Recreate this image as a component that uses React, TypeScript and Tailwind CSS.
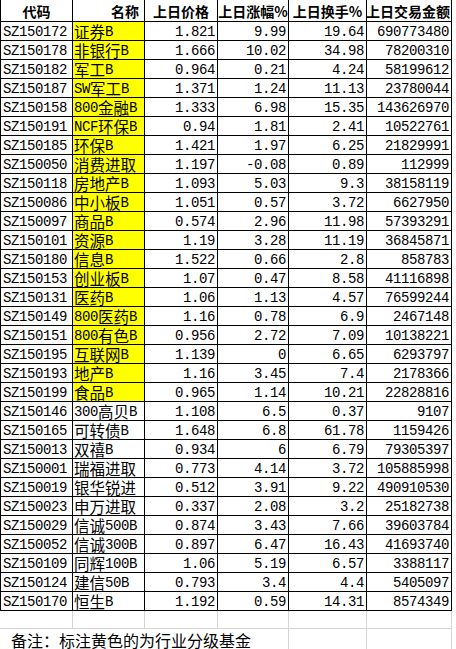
import React from 'react';

type Row = {
  code: string;
  name: string;
  price: string;
  change: string;
  turnover: string;
  amount: string;
  sector?: boolean;
};

const rows: Row[] = [
  { code: 'SZ150172', name: '证券B', price: '1.821', change: '9.99', turnover: '19.64', amount: '690773480', sector: true },
  { code: 'SZ150178', name: '非银行B', price: '1.666', change: '10.02', turnover: '34.98', amount: '78200310', sector: true },
  { code: 'SZ150182', name: '军工B', price: '0.964', change: '0.21', turnover: '4.24', amount: '58199612', sector: true },
  { code: 'SZ150187', name: 'SW军工B', price: '1.371', change: '1.24', turnover: '11.13', amount: '23780044', sector: true },
  { code: 'SZ150158', name: '800金融B', price: '1.333', change: '6.98', turnover: '15.35', amount: '143626970', sector: true },
  { code: 'SZ150191', name: 'NCF环保B', price: '0.94', change: '1.81', turnover: '2.41', amount: '10522761', sector: true },
  { code: 'SZ150185', name: '环保B', price: '1.421', change: '1.97', turnover: '6.25', amount: '21829991', sector: true },
  { code: 'SZ150050', name: '消费进取', price: '1.197', change: '-0.08', turnover: '0.89', amount: '112999', sector: true },
  { code: 'SZ150118', name: '房地产B', price: '1.093', change: '5.03', turnover: '9.3', amount: '38158119', sector: true },
  { code: 'SZ150086', name: '中小板B', price: '1.051', change: '0.57', turnover: '3.72', amount: '6627950', sector: true },
  { code: 'SZ150097', name: '商品B', price: '0.574', change: '2.96', turnover: '11.98', amount: '57393291', sector: true },
  { code: 'SZ150101', name: '资源B', price: '1.19', change: '3.28', turnover: '11.19', amount: '36845871', sector: true },
  { code: 'SZ150180', name: '信息B', price: '1.522', change: '0.66', turnover: '2.8', amount: '858783', sector: true },
  { code: 'SZ150153', name: '创业板B', price: '1.07', change: '0.47', turnover: '8.58', amount: '41116898', sector: true },
  { code: 'SZ150131', name: '医药B', price: '1.06', change: '1.13', turnover: '4.57', amount: '76599244', sector: true },
  { code: 'SZ150149', name: '800医药B', price: '1.16', change: '0.78', turnover: '6.9', amount: '2467148', sector: true },
  { code: 'SZ150151', name: '800有色B', price: '0.956', change: '2.72', turnover: '7.09', amount: '10138221', sector: true },
  { code: 'SZ150195', name: '互联网B', price: '1.139', change: '0', turnover: '6.65', amount: '6293797', sector: true },
  { code: 'SZ150193', name: '地产B', price: '1.16', change: '3.45', turnover: '7.4', amount: '2178366', sector: true },
  { code: 'SZ150199', name: '食品B', price: '0.965', change: '1.14', turnover: '10.21', amount: '22828816', sector: true },
  { code: 'SZ150146', name: '300高贝B', price: '1.108', change: '6.5', turnover: '0.37', amount: '9107' },
  { code: 'SZ150165', name: '可转债B', price: '1.648', change: '6.8', turnover: '61.78', amount: '1159426' },
  { code: 'SZ150013', name: '双禧B', price: '0.934', change: '6', turnover: '6.79', amount: '79305397' },
  { code: 'SZ150001', name: '瑞福进取', price: '0.773', change: '4.14', turnover: '3.72', amount: '105885998' },
  { code: 'SZ150019', name: '银华锐进', price: '0.512', change: '3.91', turnover: '9.22', amount: '490910530' },
  { code: 'SZ150023', name: '申万进取', price: '0.337', change: '2.08', turnover: '3.2', amount: '25182738' },
  { code: 'SZ150029', name: '信诚500B', price: '0.874', change: '3.43', turnover: '7.66', amount: '39603784' },
  { code: 'SZ150052', name: '信诚300B', price: '0.897', change: '6.47', turnover: '16.43', amount: '41693740' },
  { code: 'SZ150109', name: '同辉100B', price: '1.06', change: '5.19', turnover: '6.57', amount: '3388117' },
  { code: 'SZ150124', name: '建信50B', price: '0.793', change: '3.4', turnover: '4.4', amount: '5405097' },
  { code: 'SZ150170', name: '恒生B', price: '1.192', change: '0.59', turnover: '14.31', amount: '8574349' },
];

// ASCII in a narrow mono face, Chinese in Noto Sans CJK, like SimSun's half/full widths
const Txt: React.FC<{ text: string }> = ({ text }) => {
  const parts = text.match(/[\x00-\x7F]+|[^\x00-\x7F]+/g) ?? [];
  return (
    <>
      {parts.map((p, i) =>
        /^[\x00-\x7F]+$/.test(p) ? (
          <span key={i} className="inline-block leading-none font-['Liberation_Mono',monospace] text-[14px] tracking-[-0.4px]">
            {p}
          </span>
        ) : (
          <span key={i} className="inline-block leading-none font-['Noto_Sans_CJK_SC',sans-serif] text-[15.5px]">
            {p}
          </span>
        )
      )}
    </>
  );
};

const cols = 'grid grid-cols-[73px_72px_73px_71px_78px_85px]';
const cell = 'h-[19px] border-r border-b border-black flex items-center whitespace-nowrap leading-none pt-[1px]';
const num = `${cell} justify-end pr-[2px]`;
const head = 'h-[22px] border-r border-b border-black flex items-center whitespace-nowrap font-["Noto_Sans_CJK_SC",sans-serif] font-bold text-[14px] leading-none text-black';

export default function App() {
  return (
    <div className="w-[456px] h-[649px] bg-white text-black overflow-hidden">
      <div className={cols}>
        <div className={`${head} border-l justify-center`}>代码</div>
        <div className={`${head} justify-end pr-[5px]`}>名称</div>
        <div className={`${head} justify-center`}>上日价格</div>
        <div className={`${head} justify-center`}>上日涨幅%</div>
        <div className={`${head} justify-center`}>上日换手%</div>
        <div className={`${head} justify-end pr-[1px]`}>上日交易金额</div>

        {rows.map((r) => (
          <React.Fragment key={r.code}>
            <div className={`${cell} border-l pl-[2px]`}>
              <Txt text={r.code} />
            </div>
            <div className={`${cell} pl-[1px] ${r.sector ? 'bg-[#ffff00]' : ''}`}>
              <Txt text={r.name} />
            </div>
            <div className={num}>
              <Txt text={r.price} />
            </div>
            <div className={num}>
              <Txt text={r.change} />
            </div>
            <div className={num}>
              <Txt text={r.turnover} />
            </div>
            <div className={num}>
              <Txt text={r.amount} />
            </div>
          </React.Fragment>
        ))}
      </div>

      {/* empty row with sheet gridlines */}
      <div className={cols}>
        {[0, 1, 2, 3, 4, 5].map((i) => (
          <div key={i} className="h-[18px] border-r border-b border-[#d4d4d4]" />
        ))}
      </div>

      {/* remark overflowing across the first four columns */}
      <div className={cols}>
        <div className="col-span-4 h-[22px] border-r border-[#d4d4d4] pl-[11px] flex items-center whitespace-nowrap font-['Noto_Sans_CJK_SC',sans-serif] text-[16px] leading-none">
          备注：标注黄色的为行业分级基金
        </div>
        <div className="h-[22px] border-r border-[#d4d4d4]" />
        <div className="h-[22px] border-r border-[#d4d4d4]" />
      </div>
    </div>
  );
}
